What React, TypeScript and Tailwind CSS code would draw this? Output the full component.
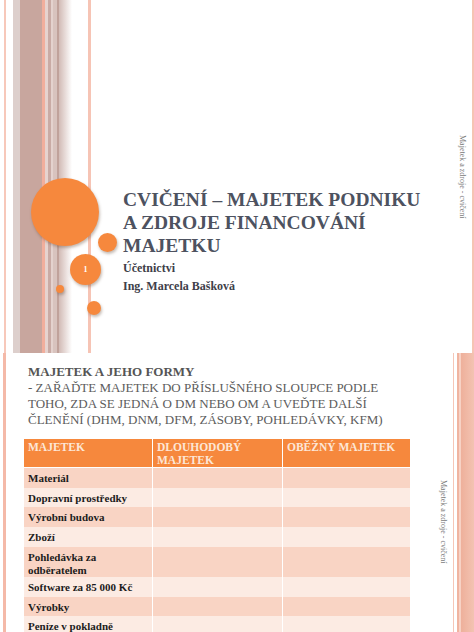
const serif = "font-['Liberation_Serif',serif]"

const rows = [
    { lines: ["Materiál"], h: "h-[20px]", bg: "bg-[#f9d4c4]" },
    { lines: ["Dopravní prostředky"], h: "h-[19px]", bg: "bg-[#fcebe3]" },
    { lines: ["Výrobní budova"], h: "h-[20px]", bg: "bg-[#f9d4c4]" },
    { lines: ["Zboží"], h: "h-[20px]", bg: "bg-[#fcebe3]" },
    { lines: ["Pohledávka za", "odběratelem"], h: "h-[30px]", bg: "bg-[#f9d4c4]" },
    { lines: ["Software za 85 000 Kč"], h: "h-[20px]", bg: "bg-[#fcebe3]" },
    { lines: ["Výrobky"], h: "h-[19px]", bg: "bg-[#f9d4c4]" },
    { lines: ["Peníze v pokladně"], h: "h-[20px]", bg: "bg-[#fcebe3]" },
]

const Circle = ({ className, children }: { className: string; children?: React.ReactNode }) => (
    <div
        className={`absolute flex items-center justify-center rounded-full bg-[#f6883d] shadow-[1px_2px_3px_rgba(90,60,40,0.35)] ${className}`}
    >
        {children}
    </div>
)

const TitleSlide = () => {
    return (
        <div className={`relative flex h-[353px] w-full ${serif}`}>
            {/* left stripes */}
            <div className="flex h-full w-[92px] shrink-0">
                <div className="w-[4px]" />
                <div className="w-[2px] bg-[#f7c8ba]" />
                <div className="w-[7px]" />
                <div className="w-[7px] bg-[#ddcfcc]" />
                <div className="w-[22px] bg-[#c8a69e]" />
                <div className="w-[3px] bg-[#f1ae9c]" />
                <div className="w-[3px] bg-[#e6d3cf]" />
                <div className="w-[3px] bg-[#c9aba5]" />
                <div className="w-[2px] bg-[#e4d2ce]" />
                <div className="w-[4px] bg-[#d8c3be]" />
                <div className="w-[2px] bg-[#c0a29b]" />
                <div className="w-[13px] bg-gradient-to-r from-[#d2bbb6] to-white" />
                <div className="w-[16px]" />
                <div className="w-[3px] bg-[#f6c4b5]" />
                <div className="w-[1px]" />
            </div>

            <Circle className="left-[31px] top-[178px] h-[68px] w-[68px]" />
            <Circle className="left-[98px] top-[233px] h-[19px] w-[19px]" />
            <Circle className="left-[70px] top-[254px] h-[31px] w-[31px]">
                <span className="text-[8px] font-bold text-white">1</span>
            </Circle>
            <Circle className="left-[56px] top-[285px] h-[8px] w-[8px]" />
            <Circle className="left-[87px] top-[301px] h-[14px] w-[14px]" />

            {/* title */}
            <div className="flex-1 pl-[31px] pt-[188px]">
                <h1 className="text-[19.5px] font-bold leading-[23px] text-[#4d5260]">
                    CVIČENÍ – MAJETEK PODNIKU
                    <br />A ZDROJE FINANCOVÁNÍ
                    <br />MAJETKU
                </h1>
                <p className="mt-[2px] text-[12px] font-bold leading-[18px] text-[#3e4049]">Účetnictvi</p>
                <p className="text-[12px] font-bold leading-[18px] text-[#3e4049]">Ing. Marcela Bašková</p>
            </div>

            <div className="w-[10px] shrink-0 pt-[135px]">
                <span className="block text-[8px] leading-[10px] text-[#7a7a7a] [writing-mode:vertical-rl]">
                    Majetek a zdroje - cvičení
                </span>
            </div>
            <div className="w-[5px] shrink-0" />
            <div className="w-[2px] shrink-0 bg-[#f6c4b4]" />
        </div>
    )
}

const TableSlide = () => {
    return (
        <div className={`flex h-[279px] w-full overflow-hidden ${serif}`}>
            <div className="w-[3px] shrink-0" />
            <div className="w-[3px] shrink-0 bg-[#f4b9a8]" />

            <div className="w-[432px] shrink-0 pl-[18px] pt-[11px]">
                <div className="pl-[4px] text-[13px] leading-[16px] text-[#5c5c5c]">
                    <p className="font-bold text-[#555555]">MAJETEK A JEHO FORMY</p>
                    <p>- ZAŘAĎTE MAJETEK DO PŘÍSLUŠNÉHO SLOUPCE PODLE</p>
                    <p>TOHO, ZDA SE JEDNÁ O DM NEBO OM A UVEĎTE DALŠÍ</p>
                    <p>ČLENĚNÍ (DHM, DNM, DFM, ZÁSOBY, POHLEDÁVKY, KFM)</p>
                </div>

                <div className="mt-[11px] w-[386px]">
                    <div className="grid h-[29px] grid-cols-[128px_130px_128px] border-b border-white bg-[#f6883d] text-[11.5px] font-bold leading-[13px] text-[#fde6d6]">
                        <div className="px-[4px] pt-[2px]">MAJETEK</div>
                        <div className="border-l border-white px-[4px] pt-[2px]">
                            DLOUHODOBÝ
                            <br />
                            MAJETEK
                        </div>
                        <div className="border-l border-white px-[4px] pt-[2px]">OBĚŽNÝ MAJETEK</div>
                    </div>
                    {rows.map((row) => (
                        <div
                            key={row.lines[0]}
                            className={`grid grid-cols-[128px_130px_128px] ${row.h} ${row.bg} text-[11px] font-bold leading-[13px] text-[#1c1c1c]`}
                        >
                            <div className="px-[4px] pt-[4px]">
                                {row.lines.map((l) => (
                                    <div key={l}>{l}</div>
                                ))}
                            </div>
                            <div className="border-l border-white" />
                            <div className="border-l border-white" />
                        </div>
                    ))}
                </div>
            </div>

            <div className="w-[10px] shrink-0 pt-[127px]">
                <span className="block text-[8px] leading-[10px] text-[#7a7a7a] [writing-mode:vertical-rl]">
                    Majetek a zdroje - cvičení
                </span>
            </div>
            <div className="w-[5px] shrink-0" />
            <div className="w-[1px] shrink-0 bg-[#f5c6b7]" />
            <div className="w-[3px] shrink-0" />
            <div className="w-[2px] shrink-0 bg-[#f0b4a0]" />
            <div className="w-[2px] shrink-0 bg-[#f7d2c5]" />
            <div className="w-[13px] shrink-0 bg-gradient-to-r from-[#eeb09b] to-[#f3c3b2]" />
        </div>
    )
}

const App = () => {
    return (
        <div className="h-[632px] w-[474px] overflow-hidden bg-white">
            <TitleSlide />
            <TableSlide />
        </div>
    )
}

export default App
